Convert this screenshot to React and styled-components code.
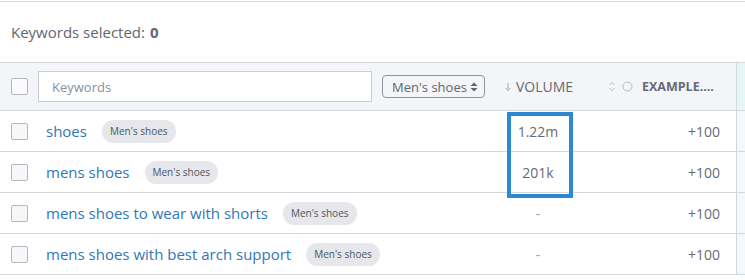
import React from 'react';
import styled, { createGlobalStyle } from 'styled-components';

const GlobalStyle = createGlobalStyle`
  html, body {
    margin: 0;
    padding: 0;
    background: #ffffff;
    font-family: 'Open Sans', 'Noto Sans', sans-serif;
    color: #5f6670;
  }
`;

const Page = styled.div`
  width: 745px;
  margin-top: 1px;
  border-top: 1px solid #d7dadf;
`;

const Summary = styled.div`
  height: 60px;
  display: flex;
  align-items: center;
  padding-left: 11px;
  font-size: 15px;
  color: #5f6670;

  b {
    font-weight: 700;
    margin-left: 5px;
  }
`;

const Table = styled.div`
  position: relative;
  border-top: 1px solid #d3d8df;
`;

const Row = styled.div`
  display: grid;
  grid-template-columns: 38px 458px 90px 150px 9px;
  height: ${({ header }) => (header ? '48px' : '41px')};
  box-sizing: border-box;
  border-bottom: 1px solid #d3d8df;
  background: ${({ header }) => (header ? '#f4f5f8' : '#ffffff')};
`;

const Cell = styled.div`
  display: flex;
  align-items: center;
  justify-content: ${({ align = 'flex-start' }) => align};
  padding: ${({ pad = '0' }) => pad};
  min-width: 0;
  white-space: nowrap;
`;

const Strip = styled.div`
  border-left: 1px solid #d3d8df;
  background: ${({ header }) => (header ? '#e4f6f7' : '#f1f9fc')};
`;

const Check = styled.span`
  width: 17px;
  height: 17px;
  box-sizing: border-box;
  margin-left: 11px;
  border: 1px solid #b3b8c0;
  border-radius: 2px;
  background: ${({ header }) => (header ? '#fbfbfc' : '#f6f7f9')};
`;

const SearchInput = styled.div`
  width: 334px;
  height: 31px;
  box-sizing: border-box;
  border: 1px solid #c9cdd3;
  background: #ffffff;
  display: flex;
  align-items: center;
  padding-left: 13px;
  font-size: 13px;
  color: #8a8f97;
`;

const Select = styled.div`
  margin-left: 10px;
  width: 103px;
  height: 23px;
  box-sizing: border-box;
  border: 1px solid #8f949b;
  border-radius: 4px;
  display: flex;
  align-items: center;
  justify-content: space-between;
  padding: 0 5px 0 9px;
  font-size: 13px;
  color: #5f6670;
`;

const HeadLabel = styled.span`
  display: flex;
  align-items: center;
  gap: ${({ gap = '4px' }) => gap};
  font-size: ${({ size = '13px' }) => size};
  color: #646b75;
  font-weight: ${({ bold }) => (bold ? 700 : 400)};
`;

const Keyword = styled.a`
  margin-left: 8px;
  font-size: 15px;
  color: #2f77b6;
  text-decoration: none;
`;

const Tag = styled.span`
  margin-left: 15px;
  height: 23px;
  padding: 0 8px;
  border-radius: 12px;
  background: #e5e7eb;
  display: flex;
  align-items: center;
  font-size: 10px;
  color: #4f5660;
`;

const Value = styled.span`
  font-size: 14px;
  color: ${({ dim }) => (dim ? '#9a9fa6' : '#656c76')};
`;

const Highlight = styled.div`
  position: absolute;
  left: 507px;
  top: 49px;
  width: 66px;
  height: 86px;
  box-sizing: border-box;
  border: 4px solid #2c88d2;
  pointer-events: none;
`;

const SortArrows = () => (
  <svg width="10" height="12" viewBox="0 0 10 12">
    <path d="M5 1.5 L8.5 5 H1.5 Z" fill="#5f6670" />
    <path d="M5 10.5 L8.5 7 H1.5 Z" fill="#5f6670" />
  </svg>
);

const DownArrow = () => (
  <svg width="8" height="10" viewBox="0 0 8 10" fill="none" stroke="#a5aab1" strokeWidth="1">
    <path d="M4 1 V8.5 M1.5 6 L4 8.5 L6.5 6" />
  </svg>
);

const Chevrons = () => (
  <svg width="8" height="11" viewBox="0 0 8 11" fill="none" stroke="#b5bac1" strokeWidth="1">
    <path d="M1.5 4 L4 1.5 L6.5 4 M1.5 7 L4 9.5 L6.5 7" />
  </svg>
);

const Circle = () => (
  <svg width="11" height="11" viewBox="0 0 11 11" fill="none" stroke="#b5bac1" strokeWidth="1">
    <circle cx="5.5" cy="5.5" r="4.5" />
  </svg>
);

const rows = [
  { keyword: 'shoes', volume: '1.22m', example: '+100' },
  { keyword: 'mens shoes', volume: '201k', example: '+100' },
  { keyword: 'mens shoes to wear with shorts', volume: '-', example: '+100' },
  { keyword: 'mens shoes with best arch support', volume: '-', example: '+100' },
];

export default function App() {
  return (
    <Page>
      <GlobalStyle />
      <Summary>
        Keywords selected:<b>0</b>
      </Summary>
      <Table>
        <Row header>
          <Cell>
            <Check header />
          </Cell>
          <Cell>
            <SearchInput>Keywords</SearchInput>
            <Select>
              Men's shoes
              <SortArrows />
            </Select>
          </Cell>
          <Cell pad="0 0 0 8px">
            <HeadLabel gap="4px" size="14px">
              <DownArrow />
              VOLUME
            </HeadLabel>
          </Cell>
          <Cell pad="0 0 0 22px">
            <HeadLabel gap="6px">
              <Chevrons />
              <Circle />
              <HeadLabel bold size="12.5px" style={{ marginLeft: 3 }}>
                EXAMPLE....
              </HeadLabel>
            </HeadLabel>
          </Cell>
          <Strip header />
        </Row>
        {rows.map(r => (
          <Row key={r.keyword}>
            <Cell>
              <Check />
            </Cell>
            <Cell>
              <Keyword href="#">{r.keyword}</Keyword>
              <Tag>Men's shoes</Tag>
            </Cell>
            <Cell align="center" pad="0 6px 0 0">
              <Value dim={r.volume === '-'}>{r.volume}</Value>
            </Cell>
            <Cell align="flex-end" pad="0 16px 0 0">
              <Value>{r.example}</Value>
            </Cell>
            <Strip />
          </Row>
        ))}
        <Highlight />
      </Table>
    </Page>
  );
}
